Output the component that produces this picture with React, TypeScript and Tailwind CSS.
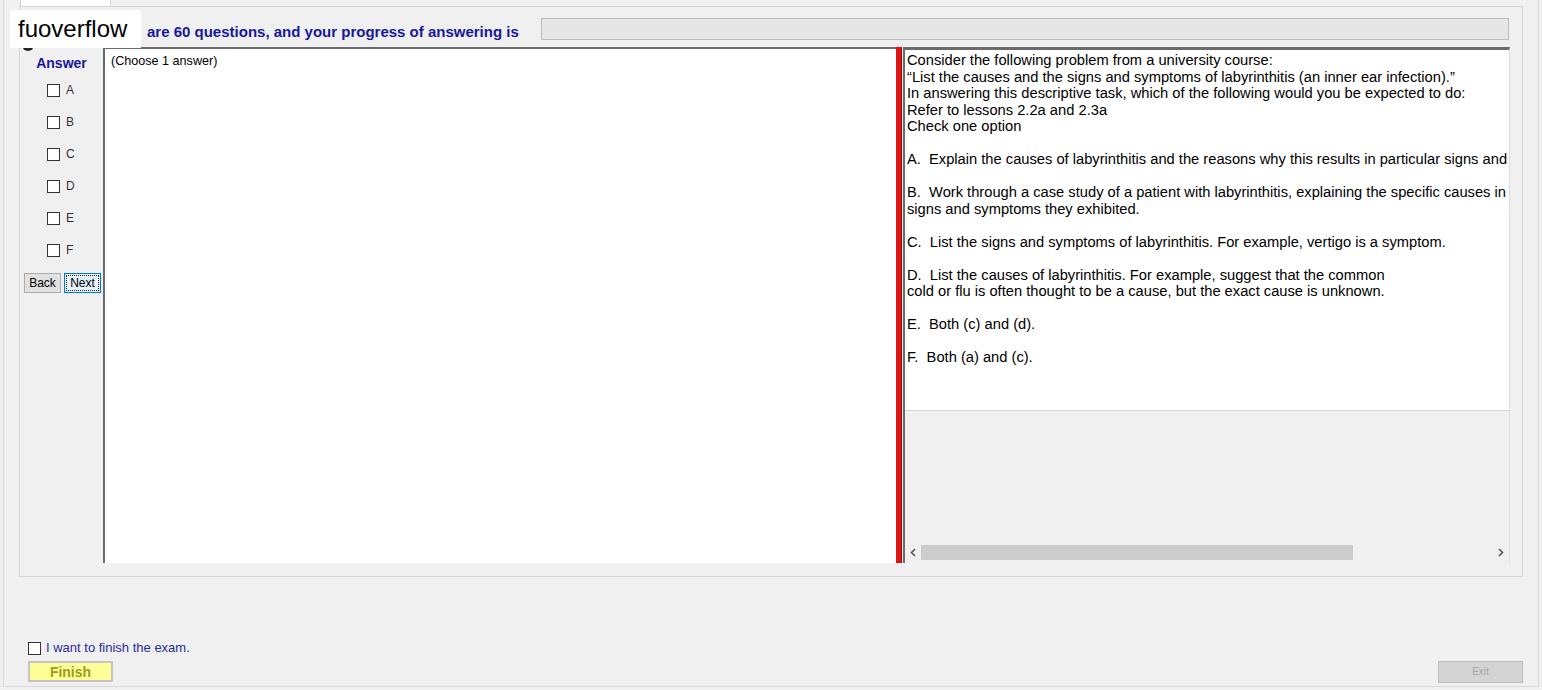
import React from "react";

const options = ["A", "B", "C", "D", "E", "F"];

const questionText = `Consider the following problem from a university course:
“List the causes and the signs and symptoms of labyrinthitis (an inner ear infection).”
In answering this descriptive task, which of the following would you be expected to do:
Refer to lessons 2.2a and 2.3a
Check one option

A.  Explain the causes of labyrinthitis and the reasons why this results in particular signs and symptoms.

B.  Work through a case study of a patient with labyrinthitis, explaining the specific causes in this case and how these led to the
signs and symptoms they exhibited.

C.  List the signs and symptoms of labyrinthitis. For example, vertigo is a symptom.

D.  List the causes of labyrinthitis. For example, suggest that the common
cold or flu is often thought to be a cause, but the exact cause is unknown.

E.  Both (c) and (d).

F.  Both (a) and (c).`;

const Box = () => (
  <span className="block w-[13px] h-[13px] bg-white border border-[#333333]" />
);

const App = () => {
  return (
    <div className="relative w-[1542px] h-[690px] overflow-hidden bg-[#f0f0f0] font-['Liberation_Sans',Arial,sans-serif] text-black">
      <div className="ml-[3px] w-[1536px] h-[687px] border-x border-b border-[#dadada] flex flex-col">
        {/* tab stub */}
        <div className="h-[6px] flex">
          <div className="ml-[16px] w-[91px] h-[6px] bg-white border-x border-[#d6d6d6]" />
        </div>

        {/* group box */}
        <div className="ml-[15px] w-[1504px] h-[571px] border border-[#d6d6d6] flex flex-col">
          <div className="mt-[11px] h-[22px] flex items-start">
            <div className="w-[521px] pl-[127px] pt-[5px] text-[15px] leading-[17px] font-bold text-[#17179a] whitespace-nowrap">
              are 60 questions, and your progress of answering is
            </div>
            <div className="w-[968px] h-[22px] bg-[#e6e6e6] border border-[#bcbcbc]" />
          </div>

          <div className="mt-[7px] h-[516px] flex">
            {/* answer column */}
            <div className="w-[83px] pl-[4px] flex flex-col">
              <div className="pt-[8px] h-[24px] leading-[16px] text-[14px] font-bold text-[#17179a] text-center pr-[4px]">
                Answer
              </div>
              <div className="mt-[3px] flex flex-col">
                {options.map((o) => (
                  <div key={o} className="h-[32px] flex items-center pl-[23px] gap-[6px]">
                    <Box />
                    <span className="text-[12px] text-[#333333]">{o}</span>
                  </div>
                ))}
              </div>
              <div className="mt-[7px] flex gap-[3px]">
                <button className="w-[37px] h-[20px] bg-[#e1e1e1] border border-[#adadad] text-[12px] leading-none text-black">
                  Back
                </button>
                <button className="w-[37px] h-[20px] bg-[#e5f1fb] border border-[#0078d7] p-[1px] text-[12px] leading-none text-black">
                  <span className="flex items-center justify-center w-full h-full border border-dotted border-[#222222]">
                    Next
                  </span>
                </button>
              </div>
            </div>

            {/* answer text box */}
            <div className="w-[793px] bg-white border-l-2 border-t-2 border-[#6b6b6b] pl-[6px] pt-[5px] text-[12.6px] leading-[14px]">
              (Choose 1 answer)
            </div>

            {/* splitter */}
            <div className="w-[6px] bg-[#e01414] border-r border-[#8a0c0c]" />

            {/* question panel */}
            <div className="ml-[1px] w-[607px] flex flex-col border-t-[3px] border-l-2 border-[#6b6b6b] border-r border-r-[#dcdcdc]">
              <div className="h-[361px] bg-white border-b border-[#d4d4d4] overflow-hidden pl-[2px] pt-[2px]">
                <div className="whitespace-pre text-[14.7px] leading-[16.5px] text-black">
                  {questionText}
                </div>
              </div>
              <div className="flex-1 flex flex-col justify-end pb-[2px]">
                <div className="h-[17px] flex items-center text-[#606060]">
                  <span className="w-[16px] flex justify-center">
                    <svg width="6" height="9" viewBox="0 0 6 9">
                      <path d="M5 1 L1.5 4.5 L5 8" fill="none" stroke="#555" strokeWidth="1.6" />
                    </svg>
                  </span>
                  <div className="w-[432px] h-[15px] bg-[#cdcdcd]" />
                  <div className="flex-1" />
                  <span className="w-[16px] flex justify-center">
                    <svg width="6" height="9" viewBox="0 0 6 9">
                      <path d="M1 1 L4.5 4.5 L1 8" fill="none" stroke="#555" strokeWidth="1.6" />
                    </svg>
                  </span>
                </div>
              </div>
            </div>
          </div>
        </div>

        {/* bottom bar */}
        <div className="flex-1 flex items-end justify-between pl-[24px] pr-[15px] pb-[4px]">
          <div className="flex flex-col gap-[5px]">
            <div className="flex items-center gap-[5px] h-[16px]">
              <Box />
              <span className="text-[13px] text-[#2a2a9e]">I want to finish the exam.</span>
            </div>
            <button className="w-[85px] h-[21px] bg-[#ffff99] border-2 border-[#c4c4c4] text-[14px] font-bold text-[#9b9b18] leading-none">
              Finish
            </button>
          </div>
          <button className="w-[85px] h-[22px] mb-[-1px] bg-[#d4d4d4] border border-[#bdbdbd] text-[10px] text-[#a6a6a6] leading-none">
            Exit
          </button>
        </div>
      </div>

      {/* watermark */}
      <div className="absolute left-[22px] top-[39px] w-[12px] h-[12px] rounded-full bg-[#222222]" />
      <div className="absolute left-[10px] top-[10px] w-[131px] h-[38px] bg-white flex items-center pl-[8px] text-[24px] text-black leading-none">
        fuoverflow
      </div>
    </div>
  );
};

export default App;
